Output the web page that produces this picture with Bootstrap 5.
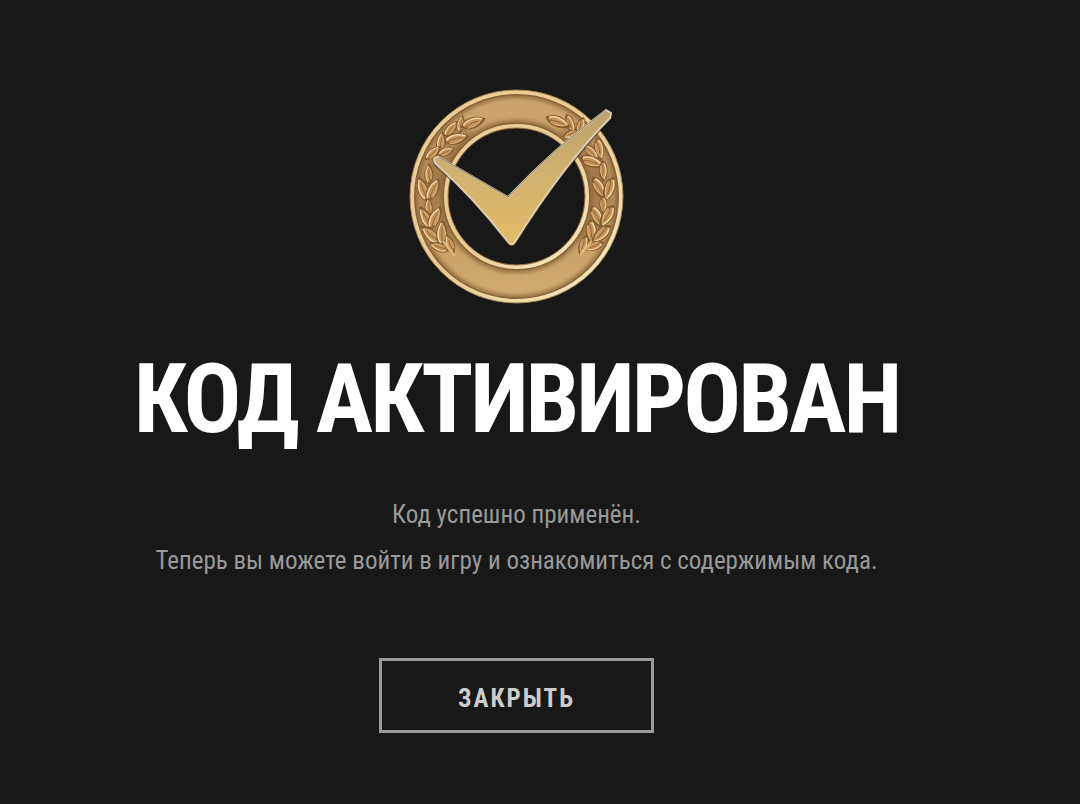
<!DOCTYPE html>
<html lang="ru">
<head>
<meta charset="utf-8">
<meta name="viewport" content="width=device-width, initial-scale=1">
<title>Код активирован</title>
<link href="https://cdn.jsdelivr.net/npm/bootstrap@5.3.0/dist/css/bootstrap.min.css" rel="stylesheet">
<style>
  body { background: #181818; color: #999; font-family: "Roboto Condensed", "Liberation Sans Narrow", Roboto, sans-serif; }
  .result { padding: 88px 47px 64px 0; }
  .medal { width: 218px; height: 218px; }
  .result-title { color: #fff; font-size: 96px; line-height: 112px; font-weight: 700; letter-spacing: -3px; margin-top: 37px; }
  .result-text { font-size: 25px; line-height: 46px; margin-top: 37px; }
  .btn-close-code { width: 275px; height: 75px; padding: 10px 12px 4px; border: 3px solid #999; border-radius: 0; color: #ccc; font-size: 25px; font-weight: 700; letter-spacing: 2px; margin-top: 74px; }
  .btn-close-code:hover { border-color: #ccc; color: #fff; }
</style>
</head>
<body>
<main class="result d-flex flex-column align-items-center text-center">
  <svg class="medal" viewBox="0 0 218 218" aria-hidden="true">
    <defs>
      <linearGradient id="gold" x1="0" y1="0" x2="0" y2="1">
        <stop offset="0" stop-color="#caa56d"/><stop offset=".4" stop-color="#b8915a"/><stop offset="1" stop-color="#cfab70"/>
      </linearGradient>
      <linearGradient id="rim" x1="0" y1="0" x2="1" y2="1">
        <stop offset="0" stop-color="#ead09a"/><stop offset=".5" stop-color="#e8cc92"/><stop offset="1" stop-color="#f6ecc8"/>
      </linearGradient>
      <linearGradient id="tick" x1="0" y1="0" x2="0" y2="1">
        <stop offset="0" stop-color="#bda16b"/><stop offset=".5" stop-color="#d1b26f"/><stop offset="1" stop-color="#e2bd67"/>
      </linearGradient>
      <filter id="soft" x="-10%" y="-10%" width="120%" height="120%"><feGaussianBlur stdDeviation="2"/></filter>
      <filter id="relief" x="-10%" y="-10%" width="120%" height="120%"><feGaussianBlur stdDeviation=".6"/></filter>
      <g id="leaf">
        <path d="M-12 0C-7-6 3-7 12 0C4 6-6 6-12 0Z" fill="#c4965a" stroke="#855d32" stroke-width="2"/>
        <path d="M-10-1C-5-5 3-5 10-1" fill="none" stroke="#f3d8a2" stroke-width="1.500"/>
        <path d="M-7 3Q0 5 7 1" fill="none" stroke="#dfb67a" stroke-width="1"/>
        <path d="M-8 1Q0-1 6 0" fill="none" stroke="#94683a" stroke-width="1"/>
      </g>
    </defs>
    <circle cx="108.500" cy="108.500" r="87" fill="none" stroke="url(#gold)" stroke-width="34"/>
    <g fill="none" stroke="#765126" filter="url(#soft)">
      <circle cx="108.500" cy="108.500" r="101" stroke-width="3"/>
      <circle cx="108.500" cy="108.500" r="74" stroke-width="3"/>
      <g stroke-width="18" opacity=".35">
        <path d="M60 38A87 87 0 0 0 36 155"/>
        <path d="M157 38A87 87 0 0 1 181 155"/>
      </g>
    </g>
    <circle cx="108.500" cy="108.500" r="102" fill="none" stroke="#886238" stroke-width="2"/>
    <circle cx="108.500" cy="108.500" r="104.500" fill="none" stroke="url(#rim)" stroke-width="4"/>
    <circle cx="108.500" cy="108.500" r="106.500" fill="none" stroke="#a58651" stroke-width="1"/>
    <circle cx="108.500" cy="108.500" r="73" fill="none" stroke="#8a6337" stroke-width="2"/>
    <circle cx="108.500" cy="108.500" r="70.500" fill="none" stroke="url(#rim)" stroke-width="4"/>
    <circle cx="108.500" cy="108.500" r="68.500" fill="none" stroke="#9c7440" stroke-width="1"/>
    <g filter="url(#relief)">
      <use href="#leaf" transform="translate(43 41) rotate(-48) scale(.8)"/>
      <use href="#leaf" transform="translate(53 36) rotate(-80) scale(.7)"/>
      <use href="#leaf" transform="translate(65 35) rotate(-20)"/>
      <use href="#leaf" transform="translate(48 51) rotate(-12)"/>
      <use href="#leaf" transform="translate(33 54) rotate(-80) scale(.8)"/>
      <use href="#leaf" transform="translate(25 65) rotate(-40) scale(.8)"/>
      <use href="#leaf" transform="translate(38 64) rotate(-20) scale(.7)"/>
      <use href="#leaf" transform="translate(21 86) rotate(-90) scale(.8)"/>
      <use href="#leaf" transform="translate(15 101) rotate(-108)"/>
      <use href="#leaf" transform="translate(25 102) rotate(-62)"/>
      <use href="#leaf" transform="translate(21 119) rotate(-92) scale(.7)"/>
      <use href="#leaf" transform="translate(18 130) rotate(-118)"/>
      <use href="#leaf" transform="translate(27 130) rotate(-62)"/>
      <use href="#leaf" transform="translate(23 147) rotate(-135)"/>
      <use href="#leaf" transform="translate(34 145) rotate(-88)"/>
      <use href="#leaf" transform="translate(31 159) rotate(-158) scale(.8)"/>
      <use href="#leaf" transform="translate(42 156) rotate(-110) scale(.8)"/>
      <path d="M35 153Q40 161 47 168" fill="none" stroke="#e5bd7b" stroke-width="2"/>
    </g>
    <g filter="url(#relief)">
      <use href="#leaf" transform="translate(172 39) rotate(110) scale(.8)"/>
      <use href="#leaf" transform="translate(162 36) rotate(70) scale(.8)"/>
      <use href="#leaf" transform="translate(150 34) rotate(22)"/>
      <use href="#leaf" transform="translate(163 46) rotate(160) scale(.7)"/>
      <use href="#leaf" transform="translate(191 61) rotate(80) scale(.9)"/>
      <use href="#leaf" transform="translate(183 64) rotate(45) scale(.8)"/>
      <use href="#leaf" transform="translate(184 74) rotate(20)"/>
      <use href="#leaf" transform="translate(195 83) rotate(90) scale(.8)"/>
      <use href="#leaf" transform="translate(191 100) rotate(62)"/>
      <use href="#leaf" transform="translate(201 101) rotate(110)"/>
      <use href="#leaf" transform="translate(195 117) rotate(90) scale(.7)"/>
      <use href="#leaf" transform="translate(189 129) rotate(65)"/>
      <use href="#leaf" transform="translate(199 128) rotate(122)"/>
      <use href="#leaf" transform="translate(183 144) rotate(88)"/>
      <use href="#leaf" transform="translate(193 146) rotate(138)"/>
      <use href="#leaf" transform="translate(175 157) rotate(110) scale(.8)"/>
      <use href="#leaf" transform="translate(186 158) rotate(160) scale(.8)"/>
      <path d="M184 153Q178 160 172 167" fill="none" stroke="#e5bd7b" stroke-width="2"/>
    </g>
    <path d="M27 76Q24 69 31 70L100 110Q145 62 199 23Q205 24 203 30Q157 76 108 154Q104 160 99 154Q66 110 27 76Z" fill="none" stroke="#33261a" stroke-width="3" opacity=".6"/>
    <path d="M27 75Q24 68 31 69L100 109Q145 61 198 22L203 25L202 30Q156 76 107 154Q104 159 100 154Q66 110 27 75Z" fill="url(#tick)" stroke="#dccdb0" stroke-width="2" stroke-linejoin="round"/>
    <path d="M31 69L100 109Q145 61 198 22" fill="none" stroke="#89796b" stroke-width="1"/>
  </svg>
  <h1 class="result-title mb-0">КОД АКТИВИРОВАН</h1>
  <p class="result-text mb-0">Код успешно применён.<br>Теперь вы можете войти в игру и ознакомиться с содержимым кода.</p>
  <button type="button" class="btn btn-close-code">ЗАКРЫТЬ</button>
</main>
<script src="https://cdn.jsdelivr.net/npm/bootstrap@5.3.0/dist/js/bootstrap.bundle.min.js"></script>
</body>
</html>
